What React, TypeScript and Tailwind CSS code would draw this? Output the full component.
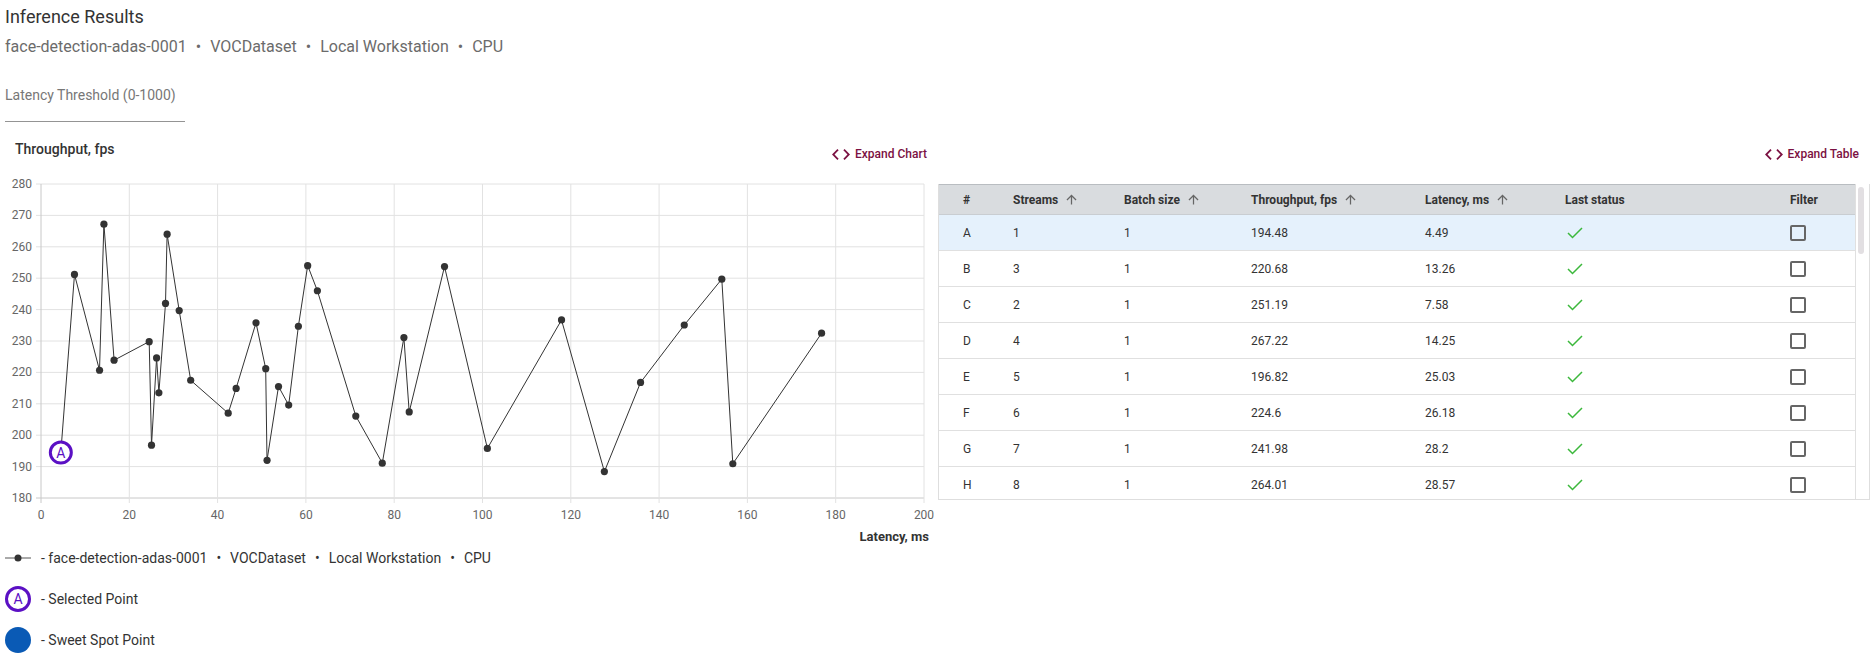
import React from "react";

const meta = ["face-detection-adas-0001", "VOCDataset", "Local Workstation", "CPU"];

// latency, throughput
const points: [number, number][] = [
  [4.49, 194.48], [7.58, 251.19], [13.26, 220.68], [14.25, 267.22], [16.55, 223.9],
  [24.5, 229.8], [25.03, 196.82], [26.18, 224.6], [26.7, 213.5], [28.2, 241.98],
  [28.57, 264.01], [31.3, 239.7], [33.9, 217.5], [42.4, 207], [44.2, 214.9],
  [48.7, 235.8], [50.9, 221.2], [51.2, 192], [53.8, 215.5], [56.1, 209.6],
  [58.3, 234.7], [60.4, 254], [62.6, 246], [71.3, 206.1], [77.3, 191.1],
  [82.2, 231.1], [83.4, 207.4], [91.4, 253.7], [101.1, 195.8], [117.9, 236.7],
  [127.6, 188.4], [135.8, 216.8], [145.7, 235.1], [154.2, 249.7], [156.7, 190.9],
  [176.8, 232.5],
];

const rows = [
  { id: "A", streams: 1, batch: 1, fps: "194.48", latency: "4.49" },
  { id: "B", streams: 3, batch: 1, fps: "220.68", latency: "13.26" },
  { id: "C", streams: 2, batch: 1, fps: "251.19", latency: "7.58" },
  { id: "D", streams: 4, batch: 1, fps: "267.22", latency: "14.25" },
  { id: "E", streams: 5, batch: 1, fps: "196.82", latency: "25.03" },
  { id: "F", streams: 6, batch: 1, fps: "224.6", latency: "26.18" },
  { id: "G", streams: 7, batch: 1, fps: "241.98", latency: "28.2" },
  { id: "H", streams: 8, batch: 1, fps: "264.01", latency: "28.57" },
];

const L = 36;
const R = 919;
const T = 14;
const B = 328;
const sx = (v: number) => L + (v / 200) * (R - L);
const sy = (v: number) => B - ((v - 180) / 100) * (B - T);

function Meta({ gap }: { gap: string }) {
  return (
    <>
      {meta.map((m, i) => (
        <React.Fragment key={m}>
          {i > 0 && <span className={gap}>•</span>}
          <span>{m}</span>
        </React.Fragment>
      ))}
    </>
  );
}

function CodeIcon() {
  return (
    <svg width="18" height="11" viewBox="2 6 20 12" fill="#7b1142">
      <path d="M9.4 16.6L4.8 12l4.6-4.6L8 6l-6 6 6 6 1.4-1.4zm5.2 0l4.6-4.6-4.6-4.6L16 6l6 6-6 6-1.4-1.4z" />
    </svg>
  );
}

function SortArrow() {
  return (
    <svg width="15" height="15" viewBox="0 0 24 24" fill="#666" className="ml-[6px]">
      <path d="M4 12l1.41 1.41L11 7.83V20h2V7.83l5.58 5.59L20 12l-8-8-8 8z" />
    </svg>
  );
}

function Chart() {
  const xs = [0, 20, 40, 60, 80, 100, 120, 140, 160, 180, 200];
  const ys = [280, 270, 260, 250, 240, 230, 220, 210, 200, 190, 180];
  const line = points.map(([x, y]) => `${sx(x).toFixed(1)},${sy(y).toFixed(1)}`).join(" ");
  const [ax, ay] = points[0];
  return (
    <svg width="925" height="375" className="block overflow-visible">
      {ys.map((v) => (
        <g key={v}>
          <line x1={31} x2={R} y1={sy(v)} y2={sy(v)} stroke={v === 180 ? "#c8c8c8" : "#e2e2e2"} />
          <text x={27} y={sy(v) + 4} textAnchor="end" fontSize="12" fill="#666">
            {v}
          </text>
        </g>
      ))}
      {xs.map((v) => (
        <g key={v}>
          <line x1={sx(v)} x2={sx(v)} y1={T} y2={B + 5} stroke={v === 0 ? "#c8c8c8" : "#e2e2e2"} />
          <text x={sx(v)} y={349} textAnchor="middle" fontSize="12" fill="#666">
            {v}
          </text>
        </g>
      ))}
      <polyline points={line} fill="none" stroke="#333" strokeWidth="1" />
      {points.slice(1).map(([x, y], i) => (
        <circle key={i} cx={sx(x)} cy={sy(y)} r="3.6" fill="#333" />
      ))}
      <circle cx={sx(ax)} cy={sy(ay)} r="10.5" fill="#fff" stroke="#5b10c4" strokeWidth="3" />
      <text x={sx(ax)} y={sy(ay) + 5} textAnchor="middle" fontSize="14" fill="#5b10c4">
        A
      </text>
      <text x={R + 5} y={371} textAnchor="end" fontSize="13" fontWeight="700" fill="#333">
        Latency, ms
      </text>
    </svg>
  );
}

const cols = "grid-cols-[74px_111px_127px_174px_140px_225px_1fr]";

export default function App() {
  return (
    <div className="min-h-screen bg-white px-[5px] pt-[5px] font-['Roboto',sans-serif] text-[#333]">
      <div className="text-[18px] leading-[24px] text-[#333]">Inference Results</div>
      <div className="mt-[6px] text-[16px] leading-[24px] text-[#6b6b6b]">
        <Meta gap="mx-[9px]" />
      </div>
      <div className="mt-[26px] text-[14px] leading-[20px] text-[#777]">Latency Threshold (0-1000)</div>
      <div className="h-[17px] w-[180px] border-b border-[#949494]" />

      <div className="flex gap-[8px]">
        <div className="w-[925px] shrink-0">
          <div className="flex h-[48px] justify-between pr-[3px] pl-[10px]">
            <div className="pt-[17px] text-[14px] leading-[20px] font-medium text-[#333]">Throughput, fps</div>
            <div className="mt-[22px] flex h-[20px] items-center gap-[5px] text-[12px] font-medium text-[#7b1142]">
              <CodeIcon />
              <span>Expand Chart</span>
            </div>
          </div>
          <Chart />
          <div className="flex flex-col gap-[15px] text-[14px] text-[#333]">
            <div className="flex h-[26px] items-center gap-[10px]">
              <svg width="26" height="10">
                <line x1="0" x2="26" y1="5" y2="5" stroke="#555" strokeWidth="1" />
                <circle cx="13" cy="5" r="3.5" fill="#333" />
              </svg>
              <span>
                - <Meta gap="mx-[9px]" />
              </span>
            </div>
            <div className="flex h-[26px] items-center gap-[10px]">
              <div className="flex h-[26px] w-[26px] items-center justify-center rounded-full border-[3px] border-[#5b10c4] text-[14px] text-[#5b10c4]">
                A
              </div>
              <span>- Selected Point</span>
            </div>
            <div className="flex h-[26px] items-center gap-[10px]">
              <div className="h-[26px] w-[26px] rounded-full bg-[#0a5ab5]" />
              <span>- Sweet Spot Point</span>
            </div>
          </div>
        </div>

        <div className="flex-1">
          <div className="flex h-[62px] justify-end pr-[11px]">
            <div className="mt-[22px] flex h-[20px] items-center gap-[5px] text-[12px] font-medium text-[#7b1142]">
              <CodeIcon />
              <span>Expand Table</span>
            </div>
          </div>
          <div className="flex h-[316px] overflow-hidden border-x border-b border-[#dedede]">
            <div className="flex-1 overflow-hidden text-[12px]">
              <div className={`grid h-[31px] ${cols} items-center border-y border-t-[#b9bdc1] border-b-[#c9cdd1] bg-[#d9dcdf] font-bold text-[#333]`}>
                <div className="pl-[24px]">#</div>
                <div className="flex items-center">Streams<SortArrow /></div>
                <div className="flex items-center">Batch size<SortArrow /></div>
                <div className="flex items-center">Throughput, fps<SortArrow /></div>
                <div className="flex items-center">Latency, ms<SortArrow /></div>
                <div>Last status</div>
                <div>Filter</div>
              </div>
              {rows.map((r) => (
                <div
                  key={r.id}
                  className={`grid h-[36px] ${cols} items-center border-b border-[#e0e0e0] text-[#333] ${
                    r.id === "A" ? "bg-[#e5f1fc]" : "bg-white"
                  }`}
                >
                  <div className="pl-[24px]">{r.id}</div>
                  <div>{r.streams}</div>
                  <div>{r.batch}</div>
                  <div>{r.fps}</div>
                  <div>{r.latency}</div>
                  <div className="pl-[2px]">
                    <svg width="16" height="12" viewBox="0 0 16 12">
                      <polyline points="1,6 5.5,10.5 15,1" fill="none" stroke="#3cb83c" strokeWidth="1.5" />
                    </svg>
                  </div>
                  <div>
                    <div className="h-[16px] w-[16px] rounded-[2px] border-2 border-[#666]" />
                  </div>
                </div>
              ))}
            </div>
            <div className="w-[14px] border-l border-[#e0e0e0] bg-white pt-[3px] pl-[2px]">
              <div className="h-[67px] w-[6px] rounded-[3px] bg-[#e2dfe2]" />
            </div>
          </div>
        </div>
      </div>
    </div>
  );
}
